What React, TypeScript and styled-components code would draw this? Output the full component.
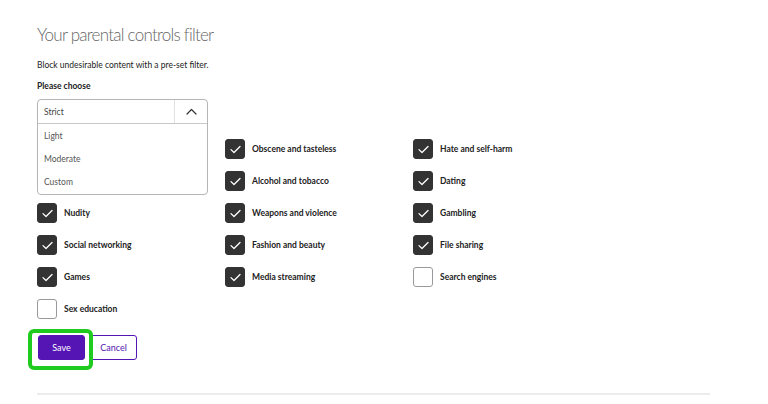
import React from "react";
import styled, { createGlobalStyle } from "styled-components";

const Global = createGlobalStyle`
  html, body { margin: 0; padding: 0; background: #fff; }
  body { font-family: Lato, "Open Sans", sans-serif; color: #222; }
`;

const Page = styled.div`
  width: 768px;
  height: 404px;
  box-sizing: border-box;
  padding: 25px 58px 0 37px;
  overflow: hidden;
`;

const Title = styled.h1`
  margin: 0;
  font-size: 17px;
  line-height: 20px;
  font-weight: 300;
  color: #666;
  letter-spacing: -0.75px;
`;

const Intro = styled.p`
  margin: 14px 0 0;
  font-size: 8.5px;
  line-height: 12px;
  color: #222;
`;

const Label = styled.div`
  margin-top: 9px;
  font-size: 8.5px;
  line-height: 12px;
  font-weight: 700;
  color: #222;
`;

const SelectWrap = styled.div`
  position: relative;
  margin-top: 7px;
  width: 171px;
  height: 24px;
`;

const SelectBox = styled.div`
  position: absolute;
  inset: 0 0 auto 0;
  z-index: 2;
  background: #fff;
  border: 1px solid #b5b5b5;
  border-radius: 4px;
  box-sizing: border-box;
  overflow: hidden;
`;

const SelectHead = styled.div`
  display: flex;
  align-items: center;
  height: 23px;
  border-bottom: 1px solid #c8c8c8;
`;

const SelectValue = styled.div`
  flex: 1;
  padding-left: 6px;
  font-size: 8.5px;
  color: #444;
`;

const Chevron = styled.div`
  width: 32px;
  height: 100%;
  border-left: 1px solid #e2e2e2;
  display: flex;
  align-items: center;
  justify-content: center;
`;

const Option = styled.div`
  height: 23.4px;
  display: flex;
  align-items: center;
  padding-left: 6px;
  font-size: 8.5px;
  color: #555;
`;

const Grid = styled.div`
  margin-top: 10px;
  display: grid;
  grid-template-columns: 188px 188px 188px;
  grid-auto-rows: 32px;
`;

const Item = styled.label`
  display: flex;
  align-items: center;
  gap: 7px;
  height: 32px;
`;

const Box = styled.span<{ $checked: boolean }>`
  width: 20px;
  height: 20px;
  box-sizing: border-box;
  border-radius: 3px;
  display: flex;
  align-items: center;
  justify-content: center;
  background: ${(p) => (p.$checked ? "#333" : "#fff")};
  border: 1px solid ${(p) => (p.$checked ? "#333" : "#9a9a9a")};
`;

const ItemText = styled.span`
  font-size: 8.5px;
  font-weight: 700;
  color: #222;
`;

const Actions = styled.div`
  display: flex;
  gap: 5px;
  margin-top: 10px;
  padding-left: 1px;
`;

const Highlight = styled.div`
  position: relative;
  &::before {
    content: "";
    position: absolute;
    left: -10px;
    top: -6px;
    right: -8px;
    bottom: -10px;
    border: 4px solid #1ecb1e;
    border-radius: 6px;
    pointer-events: none;
    z-index: 1;
  }
`;

const Button = styled.button<{ $primary?: boolean }>`
  height: 25px;
  width: 47px;
  border-radius: 3px;
  box-sizing: border-box;
  font-family: inherit;
  font-size: 9px;
  cursor: pointer;
  padding: 0;
  background: ${(p) => (p.$primary ? "#5514b4" : "#fff")};
  color: ${(p) => (p.$primary ? "#fff" : "#5514b4")};
  border: 1px solid #5514b4;
`;

const Rule = styled.hr`
  margin: 33px 0 0;
  width: 673px;
  border: none;
  border-top: 2px solid #ececec;
`;

const Check = () => (
  <svg width="11" height="9" viewBox="0 0 11 9" fill="none">
    <path d="M1 4.6 L4 7.5 L10 1.5" stroke="#fff" strokeWidth="1.3" strokeLinecap="round" strokeLinejoin="round" />
  </svg>
);

const items: ([string, boolean] | null)[] = [
  null,
  ["Obscene and tasteless", true],
  ["Hate and self-harm", true],
  null,
  ["Alcohol and tobacco", true],
  ["Dating", true],
  ["Nudity", true],
  ["Weapons and violence", true],
  ["Gambling", true],
  ["Social networking", true],
  ["Fashion and beauty", true],
  ["File sharing", true],
  ["Games", true],
  ["Media streaming", true],
  ["Search engines", false],
  ["Sex education", false],
];

export default function App() {
  return (
    <Page>
      <Global />
      <Title>Your parental controls filter</Title>
      <Intro>Block undesirable content with a pre-set filter.</Intro>
      <Label>Please choose</Label>
      <SelectWrap>
        <SelectBox>
          <SelectHead>
            <SelectValue>Strict</SelectValue>
            <Chevron>
              <svg width="11" height="7" viewBox="0 0 11 7" fill="none">
                <path d="M1 6 L5.5 1.5 L10 6" stroke="#333" strokeWidth="1.2" strokeLinecap="round" strokeLinejoin="round" />
              </svg>
            </Chevron>
          </SelectHead>
          <Option>Light</Option>
          <Option>Moderate</Option>
          <Option>Custom</Option>
        </SelectBox>
      </SelectWrap>
      <Grid>
        {items.map((it, i) =>
          it ? (
            <Item key={it[0]}>
              <Box $checked={it[1]}>{it[1] && <Check />}</Box>
              <ItemText>{it[0]}</ItemText>
            </Item>
          ) : (
            <Item key={"empty" + i} />
          )
        )}
      </Grid>
      <Actions>
        <Highlight>
          <Button $primary>Save</Button>
        </Highlight>
        <Button>Cancel</Button>
      </Actions>
      <Rule />
    </Page>
  );
}
